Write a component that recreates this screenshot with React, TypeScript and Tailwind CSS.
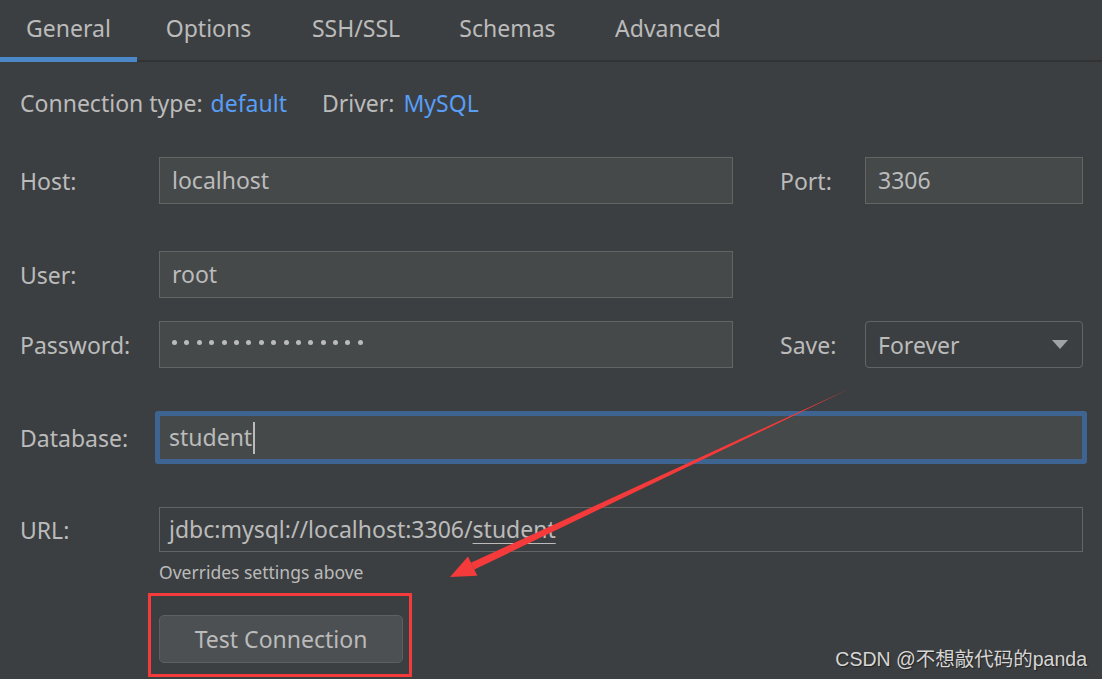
import React from 'react'

const tabs = [
  { name: 'General', w: 'w-[137px]', active: true },
  { name: 'Options', w: 'w-[143px]', active: false },
  { name: 'SSH/SSL', w: 'w-[152px]', active: false },
  { name: 'Schemas', w: 'w-[151px]', active: false },
  { name: 'Advanced', w: 'w-[170px]', active: false },
]

function Label({ children, w = 'w-[139px]' }: { children: React.ReactNode; w?: string }) {
  return <div className={`${w} shrink-0 pt-[2px] text-[#bbbbbb]`}>{children}</div>
}

function Field({ children, w, bg = 'bg-[#45494a]', pl = 'pl-[12px]' }: { children?: React.ReactNode; w: string; bg?: string; pl?: string }) {
  return (
    <div className={`${w} h-full ${bg} border border-[#646464] flex items-center ${pl} text-[#bbbbbb]`}>
      {children}
    </div>
  )
}

export default function App() {
  return (
    <div
      className="relative w-[1102px] h-[679px] overflow-hidden bg-[#3c3f41] text-[23px] text-[#bbbbbb]"
      style={{ fontFamily: '"Noto Sans", "Open Sans", sans-serif' }}
    >
      {/* tabs */}
      <div className="flex h-[62px] border-b-2 border-[#313335]">
        {tabs.map((t) => (
          <div
            key={t.name}
            className={`${t.w} h-[62px] shrink-0 text-center pt-[11px] leading-[34px] ${
              t.active ? 'border-b-[5px] border-[#4a88c7]' : ''
            }`}
          >
            {t.name}
          </div>
        ))}
      </div>

      <div className="pl-[20px]">
        {/* connection type */}
        <div className="mt-[23px] h-[36px] flex items-center">
          <span>Connection type:</span>
          <span className="ml-[8px] text-[#589df6]">default</span>
          <span className="ml-[35px]">Driver:</span>
          <span className="ml-[9px] text-[#589df6]">MySQL</span>
        </div>

        {/* host / port */}
        <div className="mt-[36px] h-[47px] flex items-center">
          <Label>Host:</Label>
          <Field w="w-[574px]">localhost</Field>
          <Label w="w-[85px] ml-[47px]">Port:</Label>
          <Field w="w-[218px]">3306</Field>
        </div>

        {/* user */}
        <div className="mt-[47px] h-[47px] flex items-center">
          <Label>User:</Label>
          <Field w="w-[574px]">root</Field>
        </div>

        {/* password / save */}
        <div className="mt-[23px] h-[47px] flex items-center">
          <Label>Password:</Label>
          <Field w="w-[574px]">
            <div className="flex gap-[7.4px] -mt-[4px]">
              {Array.from({ length: 16 }).map((_, i) => (
                <span key={i} className="w-[5px] h-[5px] rounded-full bg-[#bbbbbb]" />
              ))}
            </div>
          </Field>
          <Label w="w-[85px] ml-[47px]">Save:</Label>
          <div className="w-[218px] h-full rounded-[4px] border border-[#646464] flex items-center justify-between pl-[12px] pr-[14px]">
            <span className="pt-[2px]">Forever</span>
            <svg width="16" height="9" viewBox="0 0 16 9">
              <path d="M0 0 L16 0 L8 9 Z" fill="#a0a3a6" />
            </svg>
          </div>
        </div>

        {/* database */}
        <div className="mt-[43px] h-[53px] flex items-center">
          <Label w="w-[135px]">Database:</Label>
          <div className="w-[932px] h-full rounded-[3px] border-[5px] border-[#3e6591] bg-[#45494a] flex items-center pl-[9px]">
            <span>student</span>
            <span className="ml-[1px] w-[2px] h-[32px] bg-[#bbbbbb]" />
          </div>
        </div>

        {/* url */}
        <div className="mt-[43px] h-[45px] flex items-center">
          <Label>URL:</Label>
          <Field w="w-[924px]" bg="bg-transparent" pl="pl-[9px]">
            <span>
              jdbc:mysql://localhost:3306/
              <span className="underline decoration-1 underline-offset-[5px]">student</span>
            </span>
          </Field>
        </div>

        <div className="mt-[9px] ml-[139px] text-[17.5px] leading-[22px] text-[#bbbbbb]">
          Overrides settings above
        </div>

        <div className="mt-[32px] ml-[139px] w-[244px] h-[48px] rounded-[5px] border border-[#5e6060] bg-[#4c5052] flex items-center justify-center">
          Test Connection
        </div>
      </div>

      {/* red annotation box */}
      <div className="absolute left-[148px] top-[593px] w-[264px] h-[84px] border-[3px] border-[#f43a3a]" />

      {/* red arrow */}
      <svg className="absolute left-0 top-0" width="1102" height="679" viewBox="0 0 1102 679">
        <polygon points="849,389 474.3,569.6 470.9,562.8" fill="#f43a3a" />
        <polygon points="450,577 468,556.6 477.4,575.8" fill="#f43a3a" />
      </svg>

      {/* watermark */}
      <div
        className="absolute right-[15px] top-[645px] text-[19.5px] text-[#d6d6d6] [text-shadow:1px_1px_1px_#222]"
        style={{ fontFamily: '"Liberation Sans", "Noto Sans CJK SC", sans-serif' }}
      >
        CSDN @不想敲代码的panda
      </div>
    </div>
  )
}
